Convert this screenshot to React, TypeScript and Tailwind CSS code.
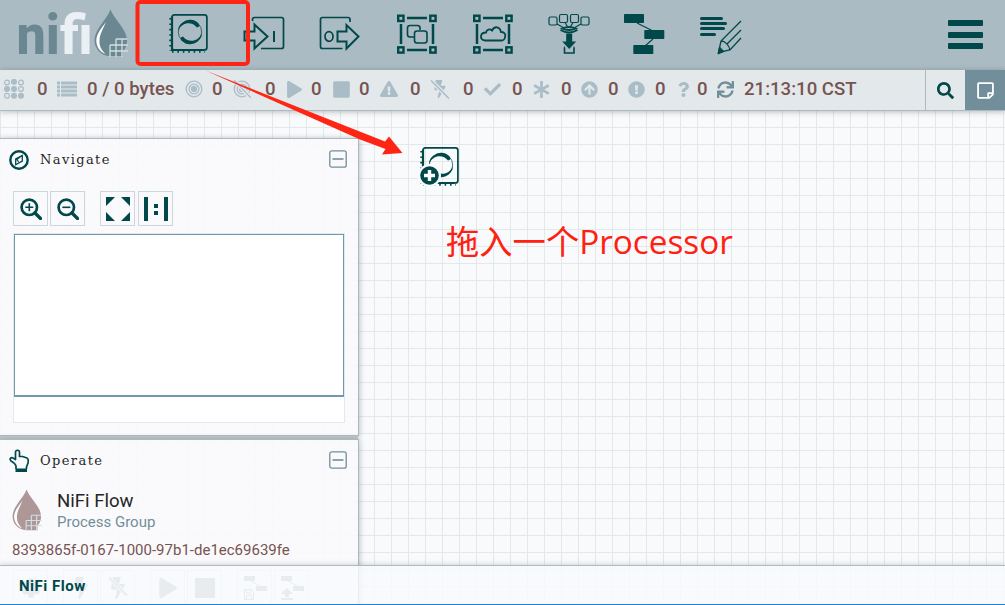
import type { ReactNode } from 'react';
import {
  FaArrowCircleUp,
  FaAsterisk,
  FaBolt,
  FaCheck,
  FaCog,
  FaExclamationCircle,
  FaExclamationTriangle,
  FaPlay,
  FaQuestion,
  FaRegStickyNote,
  FaSearch,
  FaStop,
  FaSync,
} from 'react-icons/fa';

const ProcessorIcon = () => (
  <svg width="42" height="42" viewBox="0 0 42 42" fill="none" stroke="currentColor">
    <rect x="4.9" y="1.9" width="35" height="35" rx="2.5" strokeWidth="1.7" />
    <path d="M5 4v33h32" strokeWidth="2.2" />
    <path d="M3.200 5v33M5 38.800h33" strokeWidth="1.800" strokeDasharray="1.600 3.800" />
    <circle cx="23" cy="19" r="11.700" strokeWidth=".7" />
    <g fill="currentColor" stroke="none">
      <path d="M11 18A12 12 0 0 1 31.500 10.500Q33.500 14 30 14.500C25 8 15 8.500 11 18z" />
      <path d="M11 18A12 12 0 0 1 31.500 10.500Q33.500 14 30 14.500C25 8 15 8.500 11 18z" transform="rotate(180 23 19)" />
    </g>
  </svg>
);

const InputPortIcon = () => (
  <svg width="42" height="42" viewBox="0 0 42 42" fill="none" stroke="currentColor" strokeWidth="1.7">
    <path d="M9.500 8V6.500q0-2 2-2h27q2 0 2 2v27q0 2-2 2H18" />
    <path d="M1.500 19.500h10v-7l13 12-13 12v-8h-10z" strokeWidth="2" transform="translate(0 -1)" />
    <path d="M31 18v11" strokeWidth="2" />
  </svg>
);

const OutputPortIcon = () => (
  <svg width="42" height="42" viewBox="0 0 42 42" fill="none" stroke="currentColor" strokeWidth="1.700">
    <path d="M31 9V6.500q0-2-2-2H3.500q-2 0-2 2v27q0 2 2 2h20" />
    <path d="M18.500 18.500h9V12l12 11.500-12 12v-7h-9z" strokeWidth="2" />
    <ellipse cx="10" cy="23.500" rx="4" ry="4.800" />
  </svg>
);

const GroupFrame = ({ children }: { children: ReactNode }) => (
  <svg width="42" height="42" viewBox="0 0 42 42" fill="none" stroke="currentColor">
    <path d="M11 5h20M11 37h20M5 11v20M37 11v20" strokeWidth="2.500" />
    <g strokeWidth="2.400">
      <rect x="2.200" y="2.700" width="5.300" height="5.300" />
      <rect x="34.300" y="2.700" width="5.300" height="5.300" />
      <rect x="2.200" y="34.300" width="5.300" height="5.300" />
      <rect x="34.300" y="34.300" width="5.300" height="5.300" />
    </g>
    {children}
  </svg>
);

const ProcessGroupIcon = () => (
  <GroupFrame>
    <path d="M18 24h-4q-2.500 0-2.500-2.500V15q0-2.500 2.500-2.500h7.500q2.500 0 2.500 2.500v2" strokeWidth="1.600" />
    <rect x="18.500" y="18" width="12.500" height="12" rx="2.500" strokeWidth="1.600" />
  </GroupFrame>
);

const RemoteGroupIcon = () => (
  <GroupFrame>
    <path
      d="M13 27.500c-6-1-5-8 1-8 .5-3 4-4 6-2 2.500-5 8-4 9 1.500 4 0 5 3 4 5 0 2-2 3.500-4 3.500z"
      strokeWidth="1.800"
    />
  </GroupFrame>
);

const FunnelIcon = () => (
  <svg width="42" height="42" viewBox="0 0 42 42" fill="none" stroke="currentColor" strokeWidth="1.200">
    <rect x="1" y="4" width="8" height="8" rx="1.500" />
    <rect x="11.500" y="1.500" width="8" height="8" rx="1.500" />
    <rect x="22.500" y="1.500" width="8" height="8" rx="1.500" />
    <rect x="33" y="4" width="8" height="8" rx="1.500" />
    <path d="M9 11l7 4M17 9.500l3 5M25 9.500l-3 5M33 11l-7 4" />
    <path d="M14 15.500q7-3 14 0-7 3-14 0zM12.500 17q8.500 5 17 0" strokeWidth="1.800" />
    <path d="M18.200 20.500h6v8h4l-7 7.500-7-7.500h4z" fill="currentColor" stroke="none" />
    <path d="M17 34q-.5 0-.5 1v5h9.500v-5q0-1-.5-1" strokeWidth="1.600" />
  </svg>
);

const TemplateIcon = () => (
  <svg width="42" height="42" viewBox="0 0 42 42" fill="currentColor">
    <rect x="0" y="1" width="20" height="9" rx=".8" />
    <rect x="20.300" y="17" width="20" height="9" rx=".8" />
    <rect x="9.300" y="32" width="20" height="9" rx=".8" />
    <path d="M13 10l16 8M29 26l-8 7" stroke="currentColor" strokeWidth="1.200" />
  </svg>
);

const LabelIcon = () => (
  <svg width="42" height="42" viewBox="0 0 42 42" fill="none" stroke="currentColor">
    <path d="M1.500 5.500h20M1.500 10.500h24M1.500 15.500h22M1.500 21.500h13" strokeWidth="3" strokeLinecap="round" />
    <path d="M41 8L21 28l-2.500 11.500L30 37 41 25M41 17L27 31M21 28c4 0 8 4 9 9" strokeWidth="1.300" />
    <path d="M18 41l1.500-7 4.500 4.500z" fill="currentColor" />
  </svg>
);

const Drop = ({ className }: { className?: string }) => (
  <svg viewBox="0 0 34 48" className={className}>
    <path d="M16.500.5C12 12 .5 20 .5 31.500A15.700 15.700 0 0 0 16 47h13V42q4-4 4-10.500C33 20 21 12 16.500.5z" fill="currentColor" />
    <path d="M12 13C5 22 1.500 27 2.500 34c.8 5 4 9 9 11-4-4-6.500-8-6-14C5.800 25 9 20 12 13z" fill="#fff" />
    <path d="M22 30h11M16 36h18M16 42h18M16 36v12M22 30v18M28 30v18" fill="none" stroke="#d3dde2" strokeWidth="1.300" />
  </svg>
);

const SlashedBolt = ({ size }: { size: number }) => (
  <span className="relative inline-flex w-[18px] justify-center">
    <FaBolt size={size} />
    <svg className="absolute -left-px top-0" width="20" height="19" viewBox="0 0 20 19">
      <path d="M1 .5l18 18" stroke="#e3e8eb" strokeWidth="4" />
      <path d="M1 .5l18 18" stroke="currentColor" strokeWidth="1.500" />
    </svg>
  </span>
);

const ClusterIcon = () => (
  <svg width="20" height="20" viewBox="0 0 20 20" fill="none" stroke="currentColor" strokeWidth="1.200">
    <circle cx="3" cy="3.500" r="2.400" />
    <circle cx="10" cy="2.800" r="2.400" fill="currentColor" />
    <circle cx="17" cy="3.500" r="2.400" />
    <circle cx="3" cy="10" r="2.400" fill="currentColor" />
    <circle cx="10" cy="10" r="2.400" fill="currentColor" />
    <circle cx="17" cy="10" r="2.400" />
    <circle cx="3" cy="16.800" r="2.400" />
    <circle cx="10" cy="16.800" r="2.400" fill="currentColor" />
    <circle cx="17" cy="16.800" r="2.400" fill="currentColor" />
  </svg>
);

const ListIcon = () => (
  <svg width="20" height="16" viewBox="0 0 20 16" fill="currentColor">
    <path d="M0 .5h3v3H0zM4 .5h16v3H4zM0 4.500h3v3H0zM4 4.500h16v3H4zM0 8.500h3v3H0zM4 8.500h16v3H4zM0 12.500h3v3H0zM4 12.500h16v3H4z" />
  </svg>
);

const TransmitIcon = ({ off }: { off?: boolean }) => (
  <svg width="18" height="18" viewBox="0 0 18 18" fill="none" stroke="currentColor" strokeWidth="1.300">
    <circle cx="9" cy="9" r="7.800" />
    <circle cx="9" cy="9" r="4.900" />
    <circle cx="9" cy="9" r="2.500" fill="currentColor" />
    {off && <path d="M1 0l17 18" stroke="#e3e8eb" strokeWidth="4" />}
    {off && <path d="M1 0l17 18" />}
  </svg>
);

const CompassIcon = () => (
  <svg width="20" height="20" viewBox="0 0 20 20" fill="none" stroke="currentColor">
    <circle cx="10" cy="10" r="8.700" strokeWidth="2.400" />
    <path d="M13.300 5.500v5.500l-6.600 3.700V9z" strokeWidth="1.300" />
    <path d="M13.300 5.500L6.700 9 10 12.500 8.500 9.500z" fill="currentColor" strokeWidth=".6" />
  </svg>
);

const ZoomIcon = ({ plus }: { plus?: boolean }) => (
  <svg width="22" height="22" viewBox="0 0 22 22" fill="none" stroke="currentColor">
    <circle cx="9.300" cy="9.300" r="7.700" strokeWidth="2.700" />
    <path d="M15 15l5.500 5.500" strokeWidth="3.300" strokeLinecap="round" />
    <path d={plus ? 'M5.300 9.300h8M9.300 5.300v8' : 'M5.300 9.300h8'} strokeWidth="1.600" />
  </svg>
);

const HandIcon = () => (
  <svg width="20" height="24" viewBox="0 0 20 24" fill="none" stroke="currentColor" strokeWidth="1.700">
    <path
      d="M7 20v-3c-1-3-3-4-5-5-2-2 0-4 2-3l2.500 1.500V3.500c0-3 4-3 4 0v4h3l4.500 1.500c1.500.5 1.500 2 1 5L17.500 18v2"
      strokeLinejoin="round"
    />
    <path d="M6.500 19.500h11.500V23H6.500z" fill="currentColor" stroke="none" />
  </svg>
);

const stats = [
  { icon: <ClusterIcon />, width: 'w-[53px]', slot: 'w-[33px]', value: '0' },
  { icon: <ListIcon />, width: 'w-[128px]', slot: 'w-[30px]', value: '0 / 0 bytes' },
  { icon: <TransmitIcon />, width: 'w-[48px]', slot: 'w-[27px]', value: '0' },
  { icon: <TransmitIcon off />, width: 'w-[53px]', slot: 'w-[32px]', value: '0' },
  { icon: <FaPlay size={17} />, width: 'w-[46px]', slot: 'w-[25px]', value: '0' },
  { icon: <FaStop size={19} />, width: 'w-[48px]', slot: 'w-[27px]', value: '0' },
  { icon: <FaExclamationTriangle size={18} />, width: 'w-[51px]', slot: 'w-[30px]', value: '0' },
  { icon: <SlashedBolt size={18} />, width: 'w-[53px]', slot: 'w-[32px]', value: '0' },
  { icon: <FaCheck size={17} />, width: 'w-[49px]', slot: 'w-[28px]', value: '0' },
  { icon: <FaAsterisk size={17} />, width: 'w-[48px]', slot: 'w-[28px]', value: '0' },
  { icon: <FaArrowCircleUp size={17} />, width: 'w-[47px]', slot: 'w-[27px]', value: '0' },
  { icon: <FaExclamationCircle size={17} />, width: 'w-[48px]', slot: 'w-[27px]', value: '0' },
  { icon: <FaQuestion size={15} />, width: 'w-[41px]', slot: 'w-[21px]', value: '0' },
  { icon: <FaSync size={17} className="text-[#728e9b]" />, width: 'w-[160px]', slot: 'w-[27px]', value: '21:13:10 CST' },
];

const tools = [ProcessorIcon, InputPortIcon, OutputPortIcon, ProcessGroupIcon, RemoteGroupIcon, FunnelIcon, TemplateIcon, LabelIcon];

function PanelHeader({ icon, title }: { icon: ReactNode; title: string }) {
  return (
    <div className="flex h-10 items-center pl-[9px] pr-[11px]">
      <span className="flex w-[31px] pt-px text-[#004849]">{icon}</span>
      <span className="pt-px font-['DejaVu_Serif',serif] text-[13px] tracking-[1.400px] text-[#262626]">{title}</span>
      <svg className="ml-auto text-[#728e9b]" width="18" height="18" viewBox="0 0 18 18" fill="none" stroke="currentColor" strokeWidth="1.300">
        <rect x=".8" y=".8" width="16.400" height="16.400" rx="2" />
        <path d="M3.500 9h11" strokeWidth="1.600" />
      </svg>
    </div>
  );
}

function ToolButton({ children }: { children: ReactNode }) {
  return (
    <div className="flex size-[35px] shrink-0 items-center justify-center border border-[#cbd8db] text-[#004849]">
      {children}
    </div>
  );
}

function GhostButton({ children }: { children?: ReactNode }) {
  return (
    <div className="flex size-[35px] shrink-0 items-center justify-center border border-[#ccd8db]/60 text-[#7d979d]/70">
      {children}
    </div>
  );
}

export default function App() {
  return (
    <div className="relative h-[605px] w-[1005px] overflow-hidden bg-[#f9fafc] font-['Roboto',sans-serif]">
      <header className="flex h-[70px] items-start bg-[#aabbc3] text-[#004849]">
        <svg className="h-[70px] w-[94px] shrink-0 font-['Roboto',sans-serif] text-[56px] font-extrabold" viewBox="0 0 94 70">
          <text x="16.500" y="54" textLength="76" lengthAdjust="spacingAndGlyphs">
            <tspan fill="#6a8792">ni</tspan>
            <tspan fill="#eaf0f3">fi</tspan>
          </text>
        </svg>
        <Drop className="mt-[9px] h-[48px] w-[34px] shrink-0 text-[#6a8792]" />
        <div className="mt-[13px] ml-[39px] flex gap-[34.200px]">
          {tools.map((Tool, idx) => (
            <Tool key={idx} />
          ))}
        </div>
        <div className="mt-5 mr-[22px] ml-auto flex flex-col gap-[5.500px]">
          <span className="h-[6px] w-[35px] rounded-[1px] bg-[#004849]" />
          <span className="h-[6px] w-[35px] rounded-[1px] bg-[#004849]" />
          <span className="h-[6px] w-[35px] rounded-[1px] bg-[#004849]" />
        </div>
      </header>

      <div className="relative z-10 flex h-[41px] border-b border-[#aabbc3] bg-[#e3e8eb] shadow-[0_1px_6px_rgba(0,0,0,0.25)]">
        <div className="flex w-[925px] items-center pb-[2px] pl-[4px]">
          {stats.map((stat, idx) => (
            <div key={idx} className={`flex shrink-0 items-center ${stat.width}`}>
              <span className={`flex shrink-0 text-[#aabdc7] ${stat.slot}`}>{stat.icon}</span>
              <span className="text-[18.600px] leading-[26px] font-medium whitespace-nowrap text-[#775351]">{stat.value}</span>
            </div>
          ))}
        </div>
        <div className="flex w-10 items-center justify-center border-l border-[#aabbc3] text-[#004849]">
          <FaSearch size={17} />
        </div>
        <div className="flex w-10 items-center justify-center bg-[#728e9b] text-white">
          <FaRegStickyNote size={19} />
        </div>
      </div>

      <main className="relative h-[494px] overflow-hidden bg-[linear-gradient(to_right,#e3e8eb_1px,transparent_1px),linear-gradient(to_bottom,#e3e8eb_1px,transparent_1px)] bg-[size:17px_17px] bg-[position:0_16px] pt-[27px]">
        <section className="h-[298px] w-[359px] border-y border-r border-[#aabbc3] bg-[#f9fafc]/90 shadow-[0_1px_6px_rgba(0,0,0,0.3)]">
          <PanelHeader icon={<CompassIcon />} title="Navigate" />
          <div className="mt-3 ml-[13px] flex">
            <div className="flex gap-[2px]">
              <ToolButton><ZoomIcon plus /></ToolButton>
              <ToolButton><ZoomIcon /></ToolButton>
            </div>
            <div className="ml-[15px] flex gap-[3px]">
              <ToolButton>
                <svg width="24" height="24" viewBox="0 0 24 24" fill="currentColor">
                  <path d="M0 0h9L0 9zM15 0h9v9zM0 15l9 9H0zM24 15v9h-9z" />
                </svg>
              </ToolButton>
              <ToolButton>
                <svg width="24" height="24" viewBox="0 0 24 24" fill="currentColor">
                  <path d="M0 0h4v24H0zM20 0h4v24h-4zM10 7h4v4h-4zM10 14h4v4h-4z" />
                </svg>
              </ToolButton>
            </div>
          </div>
          <div className="mt-[7px] ml-[13px] h-[190px] w-[332px] border border-[#e3e8eb] bg-white">
            <div className="h-[163px] w-[330px] border border-b-2 border-[#7098ad]" />
          </div>
        </section>

        <div className="h-[3px] w-[358px] bg-[#c5c8ca]" />

        <section className="h-[220px] w-[359px] border-t border-r border-[#aabbc3] bg-[#f9fafc]/90 shadow-[0_1px_6px_rgba(0,0,0,0.3)]">
          <PanelHeader icon={<HandIcon />} title="Operate" />
          <div className="mt-2 flex pl-[12px]">
            <Drop className="mt-px h-[42px] w-[30px] text-[#ad9897]" />
            <div className="ml-[15px] pt-[3px]">
              <div className="text-[18.600px] leading-[21px] text-[#262626]">NiFi Flow</div>
              <div className="text-[15px] leading-[20px] text-[#728e9b]">Process Group</div>
            </div>
          </div>
          <div className="mt-[8px] pl-[12px] text-[15px] leading-[20px] text-[#775351]">
            8393865f-0167-1000-97b1-de1ec69639fe
          </div>
          <div className="mt-[10px] flex pl-[13px]">
            <GhostButton><FaCog size={20} /></GhostButton>
            <div className="ml-[15px] flex gap-[2px]">
              <GhostButton><FaBolt size={22} /></GhostButton>
              <GhostButton><SlashedBolt size={22} /></GhostButton>
            </div>
            <div className="ml-[15px] flex gap-[2px]">
              <GhostButton><FaPlay size={20} /></GhostButton>
              <GhostButton>
                <span className="size-5 bg-current" />
              </GhostButton>
            </div>
            <div className="ml-[15px] flex gap-[2px]">
              <GhostButton>
                <svg width="24" height="24" viewBox="0 0 24 24" fill="currentColor">
                  <path d="M1 0h11v5H1zM13 10h11v5H13z" />
                  <path d="M8 5l9 5M1.500 13.500h7l2 2v8h-9zM3.500 14v3h4v-3M3.500 23v-4h5v4" fill="none" stroke="currentColor" />
                </svg>
              </GhostButton>
              <GhostButton>
                <svg width="24" height="24" viewBox="0 0 24 24" fill="currentColor">
                  <path d="M1 0h11v5H1zM13 10h11v5H13zM7 12l6 6h-4v3H5v-3H1zM1 22h12v2H1z" />
                  <path d="M8 5l9 5" stroke="currentColor" />
                </svg>
              </GhostButton>
            </div>
          </div>
        </section>

        {/* component being dragged onto the canvas */}
        <div className="absolute top-[35px] left-[418px] text-[#004849]">
          <ProcessorIcon />
          <svg className="absolute top-[17px] left-0 overflow-visible" width="22" height="22" viewBox="0 0 22 22">
            <circle cx="11.500" cy="12.500" r="11.500" fill="#f9fafc" />
            <circle cx="11.500" cy="12.500" r="9.300" fill="currentColor" />
            <path d="M11.500 7v11M6 12.500h11" stroke="#fff" strokeWidth="3.400" />
          </svg>
        </div>
      </main>

      <footer className="absolute bottom-0 left-0 z-10 flex h-10 w-full items-center border-t border-b border-t-[#aabbc3] border-b-[#1883d7] bg-[#f9fafc]/80 pl-[19px] shadow-[0_-1px_5px_rgba(0,0,0,0.15)]">
        <span className="pt-0.5 text-[15px] font-bold tracking-[0.500px] text-[#004849]">NiFi Flow</span>
      </footer>

      {/* annotations */}
      <svg className="pointer-events-none absolute inset-0 z-20" width="1005" height="605" viewBox="0 0 1005 605">
        <rect x="137.500" y="2" width="110.500" height="62" rx="3" fill="none" stroke="#ff2515" strokeWidth="4" />
        <path d="M205.500 70.500L385 141.500l4-5 13.500 16.500-20.500 1.500 3.500-5.500L360 139.500z" fill="#ff2515" />
      </svg>
      <p className="absolute top-[219px] left-[446px] z-20 font-['Open_Sans','Noto_Sans_CJK_SC',sans-serif] text-[33.300px] leading-[44px] whitespace-nowrap text-[#ff2010]">
        拖入一个Processor
      </p>
    </div>
  );
}
